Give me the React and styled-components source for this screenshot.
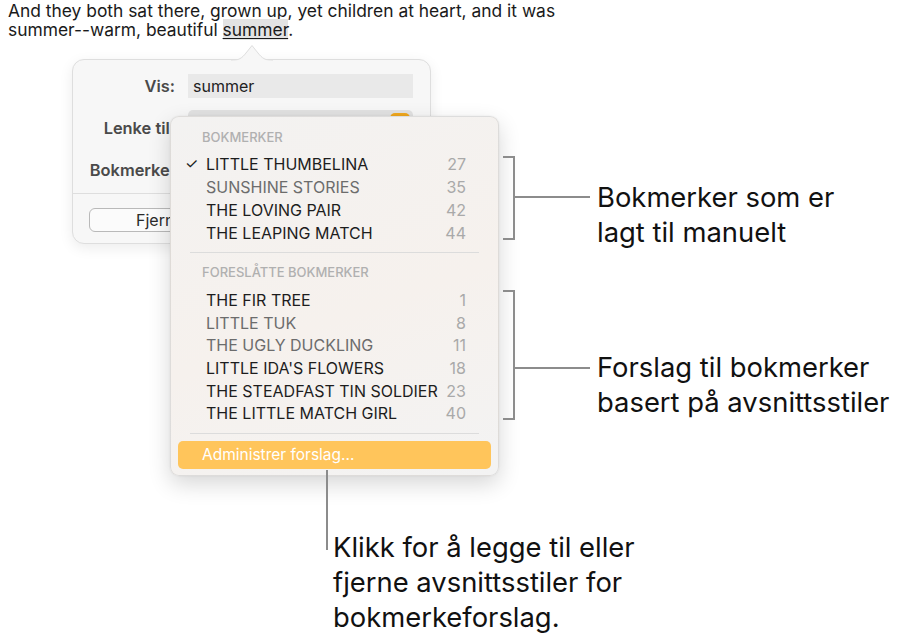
import React from "react";
import styled, { createGlobalStyle } from "styled-components";

const GlobalStyle = createGlobalStyle`
  html, body { margin: 0; padding: 0; background: #ffffff; }
  body { font-family: Inter, "Liberation Sans", Arial, sans-serif; color: #1c1c1c; }
`;

const Page = styled.div`
  position: relative;
  width: 908px;
  height: 643px;
  overflow: hidden;
  background: #fff;
`;

const Intro = styled.p`
  margin: 0;
  padding: 1px 0 0 8px;
  width: 600px;
  font-size: 17.4px;
  line-height: 19px;
  color: #1a1a1a;
`;

const Selected = styled.span`
  background: #e3e3e3;
  text-decoration: underline;
  text-underline-offset: 2px;
`;

const Popover = styled.section`
  position: relative;
  margin: 20px 0 0 72px;
  width: 359px;
  height: 185px;
  box-sizing: border-box;
  background: #f7f7f7;
  border: 1px solid #dedede;
  border-radius: 12px;
  box-shadow: 0 4px 14px rgba(0, 0, 0, 0.08);
`;

const Arrow = styled.svg`
  position: absolute;
  left: 158px;
  top: -16px;
  width: 42px;
  height: 17px;
`;

const Form = styled.div`
  display: grid;
  grid-template-columns: 102px 1fr;
  grid-template-rows: 24px 36px 24px;
  column-gap: 13px;
  row-gap: 12px;
  padding: 14px 17px 0 0;
  align-items: center;
`;

const Label = styled.div`
  text-align: right;
  font-size: 16.4px;
  font-weight: 600;
  color: #4a4a4a;
`;

const Field = styled.div`
  align-self: stretch;
  display: flex;
  align-items: center;
  padding-left: 5px;
  font-size: 16px;
  color: #222;
  background: ${(p) => (p.$dark ? "#e2e2e2" : "#e9e9e9")};
  border-radius: ${(p) => (p.$dark ? "5px" : "0")};
  position: relative;
`;

const Stepper = styled.span`
  position: absolute;
  right: 3px;
  top: 3px;
  width: 20px;
  height: 30px;
  border-radius: 5px;
  background: #f0a81e;
`;

const Divider = styled.hr`
  margin: ${(p) => p.$m || "0"};
  border: 0;
  border-top: 1px solid ${(p) => p.$c || "#dedede"};
`;

const Footer = styled.div`
  padding: 14px 0 0 16px;
`;

const Button = styled.div`
  width: 133px;
  height: 24px;
  box-sizing: border-box;
  border: 1px solid #b9b9b9;
  border-radius: 6px;
  background: #fbfbfb;
  font-size: 16px;
  line-height: 22px;
  color: #2a2a2a;
  padding-left: 46px;
`;

const Menu = styled.div`
  position: absolute;
  left: 170px;
  top: 116px;
  width: 329px;
  height: 360px;
  box-sizing: border-box;
  padding: 10px 7px 0;
  border-radius: 9px;
  background: linear-gradient(160deg, #f3f2f1 0%, #f6f1ed 55%, #f3f3f3 100%);
  border: 1px solid rgba(0, 0, 0, 0.09);
  box-shadow: 0 8px 22px rgba(0, 0, 0, 0.16), 0 0 2px rgba(0, 0, 0, 0.08);
`;

const Heading = styled.div`
  height: 20px;
  line-height: 20px;
  padding-left: 24px;
  font-size: 13px;
  font-weight: 500;
  color: #b0b0b0;
  margin-bottom: ${(p) => p.$mb}px;
`;

const Item = styled.div`
  display: flex;
  align-items: center;
  height: ${(p) => p.$h}px;
  padding: 0 25px 0 7px;
  font-size: 16px;
  color: ${(p) => (p.$dim ? "#6c6c6c" : "#1d1d1d")};
`;

const Check = styled.span`
  width: 21px;
  font-size: 15px;
  color: #1d1d1d;
`;

const Name = styled.span`
  flex: 1;
`;

const Count = styled.span`
  color: #a9a9a9;
`;

const Action = styled.div`
  margin-top: 7px;
  height: 28px;
  line-height: 28px;
  padding-left: 24px;
  border-radius: 5px;
  background: #ffc55b;
  color: #ffffff;
  font-size: 15.5px;
`;

const Bracket = styled.div`
  position: absolute;
  left: 503px;
  top: ${(p) => p.$top}px;
  width: 10px;
  height: ${(p) => p.$h}px;
  border: 2px solid #8c8c8c;
  border-left: 0;
`;

const Stem = styled.div`
  position: absolute;
  background: #8c8c8c;
  left: ${(p) => p.$x}px;
  top: ${(p) => p.$y}px;
  width: ${(p) => p.$w}px;
  height: ${(p) => p.$h}px;
`;

const Callout = styled.div`
  position: absolute;
  left: ${(p) => p.$x}px;
  top: ${(p) => p.$y}px;
  font-size: 27.4px;
  line-height: 35px;
  color: #111;
  white-space: nowrap;
`;

const saved = [
  { name: "LITTLE THUMBELINA", n: 27, checked: true },
  { name: "SUNSHINE STORIES", n: 35, dim: true },
  { name: "THE LOVING PAIR", n: 42 },
  { name: "THE LEAPING MATCH", n: 44 },
];

const suggested = [
  { name: "THE FIR TREE", n: 1 },
  { name: "LITTLE TUK", n: 8, dim: true },
  { name: "THE UGLY DUCKLING", n: 11, dim: true },
  { name: "LITTLE IDA'S FLOWERS", n: 18 },
  { name: "THE STEADFAST TIN SOLDIER", n: 23 },
  { name: "THE LITTLE MATCH GIRL", n: 40 },
];

export default function App() {
  return (
    <Page>
      <GlobalStyle />
      <Intro>
        And they both sat there, grown up, yet children at heart, and it was
        summer--warm, beautiful <Selected>summer</Selected>.
      </Intro>

      <Popover>
        <Arrow viewBox="0 0 42 17">
          <path
            d="M0 16.5 C8 16.5 11 14 15 9 L21 1.5 L27 9 C31 14 34 16.5 42 16.5"
            fill="#f7f7f7"
            stroke="#dedede"
            strokeWidth="1"
          />
          <rect x="0" y="16.5" width="42" height="1" fill="#f7f7f7" />
        </Arrow>
        <Form>
          <Label>Vis:</Label>
          <Field>summer</Field>
          <Label>Lenke til:</Label>
          <Field $dark>
            <Stepper />
          </Field>
          <Label>Bokmerke:</Label>
          <div />
        </Form>
        <Divider $m="11px 0 0" />
        <Footer>
          <Button>Fjern</Button>
        </Footer>
      </Popover>

      <Menu>
        <Heading $mb={5}>BOKMERKER</Heading>
        {saved.map((b) => (
          <Item key={b.name} $h={23} $dim={b.dim}>
            <Check>{b.checked ? "✓" : ""}</Check>
            <Name>{b.name}</Name>
            <Count>{b.n}</Count>
          </Item>
        ))}
        <Divider $m="8px 12px 9px" $c="#dcdcdc" />
        <Heading $mb={7}>FORESLÅTTE BOKMERKER</Heading>
        {suggested.map((b) => (
          <Item key={b.name} $h={22.6} $dim={b.dim}>
            <Check />
            <Name>{b.name}</Name>
            <Count>{b.n}</Count>
          </Item>
        ))}
        <Divider $m="8px 12px 0" $c="#dcdcdc" />
        <Action>Administrer forslag...</Action>
      </Menu>

      <Bracket $top={156} $h={80} />
      <Stem $x={513} $y={196} $w={77} $h={2} />
      <Callout $x={597} $y={180}>
        Bokmerker som er
        <br />
        lagt til manuelt
      </Callout>

      <Bracket $top={290} $h={126} />
      <Stem $x={513} $y={367} $w={77} $h={2} />
      <Callout $x={597} $y={350}>
        Forslag til bokmerker
        <br />
        basert på avsnittsstiler
      </Callout>

      <Stem $x={326} $y={470} $w={2} $h={80} />
      <Callout $x={333} $y={530}>
        Klikk for å legge til eller
        <br />
        fjerne avsnittsstiler for
        <br />
        bokmerkeforslag.
      </Callout>
    </Page>
  );
}
